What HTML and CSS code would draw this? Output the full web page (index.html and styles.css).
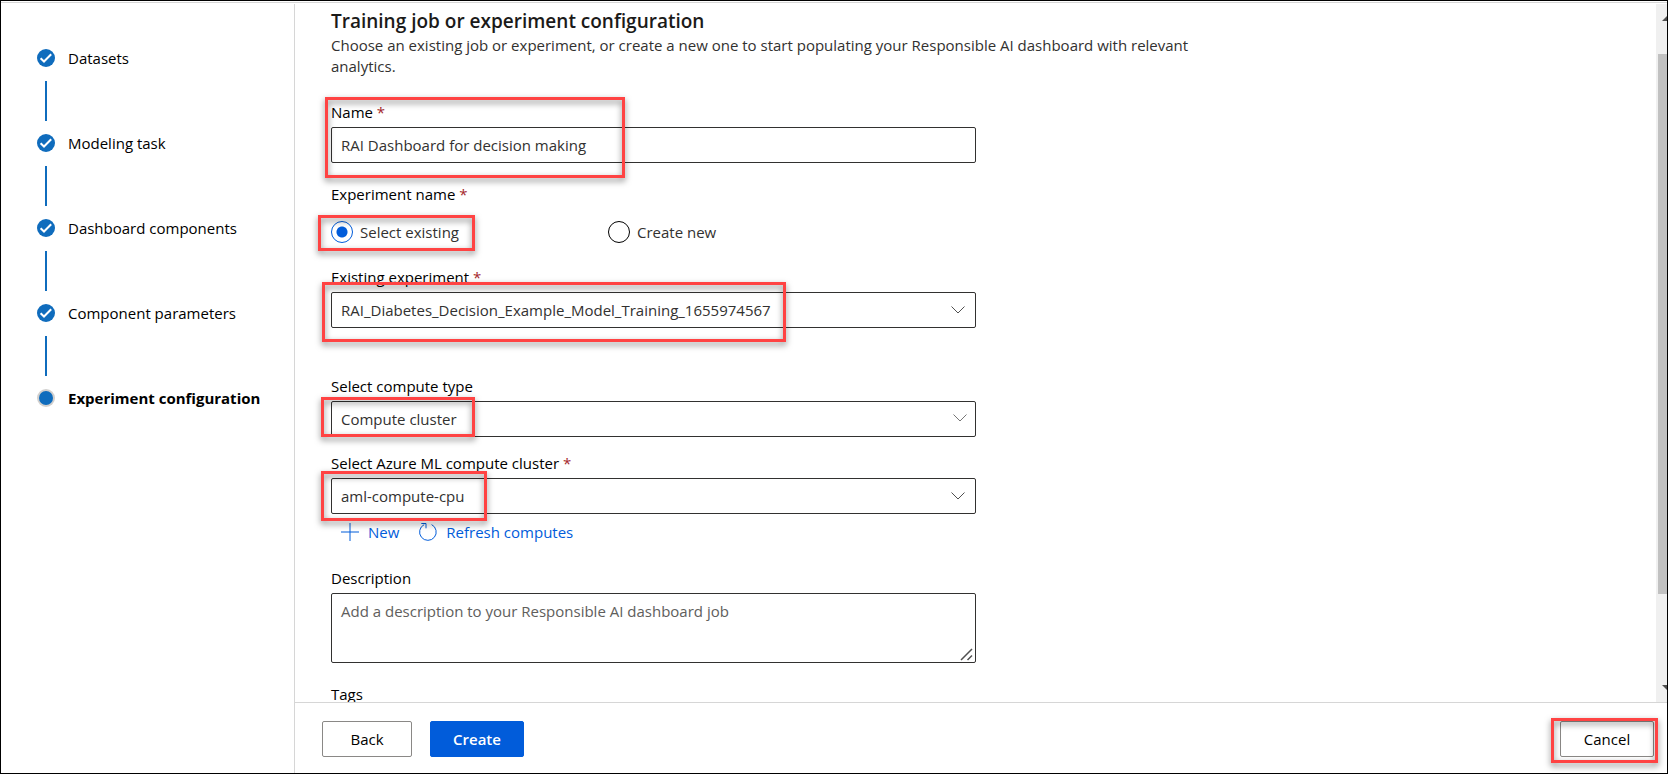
FILE: index.html
```html
<!DOCTYPE html>
<html lang="en">
<head>
<meta charset="utf-8">
<title>Training job or experiment configuration</title>
<link rel="stylesheet" href="styles.css">
</head>
<body>
<div class="app">
  <div class="topline"></div>
  <div class="layout">
    <nav class="sidebar" aria-label="Wizard steps">
      <ol class="steps">
        <li class="step"><svg class="step-icon" viewBox="0 0 18 18"><circle cx="9" cy="9" r="9"/><path d="M3.6 9.2 7 12.5 14.2 5.2"/></svg><span>Datasets</span></li>
        <li class="step"><svg class="step-icon" viewBox="0 0 18 18"><circle cx="9" cy="9" r="9"/><path d="M3.6 9.2 7 12.5 14.2 5.2"/></svg><span>Modeling task</span></li>
        <li class="step"><svg class="step-icon" viewBox="0 0 18 18"><circle cx="9" cy="9" r="9"/><path d="M3.6 9.2 7 12.5 14.2 5.2"/></svg><span>Dashboard components</span></li>
        <li class="step"><svg class="step-icon" viewBox="0 0 18 18"><circle cx="9" cy="9" r="9"/><path d="M3.6 9.2 7 12.5 14.2 5.2"/></svg><span>Component parameters</span></li>
        <li class="step current" aria-current="step"><svg class="step-icon" viewBox="0 0 18 18"><circle class="ring" cx="9" cy="9" r="9"/><circle cx="9" cy="9" r="7"/></svg><span>Experiment configuration</span></li>
      </ol>
    </nav>
    <div class="panel">
      <div class="scroll">
        <main class="content">
          <h1 class="title">Training job or experiment configuration</h1>
          <p class="intro">Choose an existing job or experiment, or create a new one to start populating your Responsible AI dashboard with relevant analytics.</p>
          <form class="form">
            <div class="field name-field">
              <label class="label" for="name">Name <span class="required">*</span></label>
              <input class="control" id="name" type="text" value="RAI Dashboard for decision making">
              <div class="highlight hl-name"></div>
            </div>
            <fieldset class="radio-group">
              <legend class="label">Experiment name <span class="required">*</span></legend>
              <div class="radios">
                <label class="radio"><input type="radio" name="exp" checked>Select existing<span class="highlight hl-radio"></span></label>
                <label class="radio"><input type="radio" name="exp">Create new</label>
              </div>
            </fieldset>
            <div class="field existing-field">
              <label class="label" for="existing">Existing experiment <span class="required">*</span></label>
              <select class="control" id="existing"><option>RAI_Diabetes_Decision_Example_Model_Training_1655974567</option></select>
              <svg class="chevron" viewBox="0 0 14 8"><path d="M.5.5 7 7 13.500.5"/></svg>
              <div class="highlight hl-existing"></div>
            </div>
            <div class="field type-field">
              <label class="label" for="ctype">Select compute type</label>
              <select class="control" id="ctype"><option>Compute cluster</option></select>
              <svg class="chevron light" viewBox="0 0 14 8"><path d="M.5.5 7 7 13.500.5"/></svg>
              <div class="highlight hl-type"></div>
            </div>
            <div class="field cluster-field">
              <label class="label" for="cluster">Select Azure ML compute cluster <span class="required">*</span></label>
              <select class="control" id="cluster"><option>aml-compute-cpu</option></select>
              <svg class="chevron" viewBox="0 0 14 8"><path d="M.5.5 7 7 13.500.5"/></svg>
              <div class="highlight hl-cluster"></div>
            </div>
            <div class="actions">
              <button class="link" type="button"><svg viewBox="0 0 18 18"><path d="M9 0V18M0 9H18"/></svg>New</button>
              <button class="link" type="button"><svg viewBox="0 0 18 18"><path d="M12.600 1.600A8.300 8.300 0 1 1 5.200 1.600M2.300.5H7V5.300"/></svg>Refresh computes</button>
            </div>
            <div class="field description-field">
              <label class="label" for="desc">Description</label>
              <textarea class="control area" id="desc" placeholder="Add a description to your Responsible AI dashboard job"></textarea>
              <svg class="grip" viewBox="0 0 13 13"><path d="M1 12 12 1M7.500 12 12 7.500"/></svg>
            </div>
            <div class="label tags">Tags</div>
          </form>
        </main>
        <div class="scrollbar" aria-hidden="true">
          <svg class="arrow" viewBox="0 0 10 5"><path d="M0 5 5 0 10 5Z"/></svg>
          <div class="track"><div class="thumb"></div></div>
          <svg class="arrow" viewBox="0 0 10 5"><path d="M0 0 5 5 10 0Z"/></svg>
        </div>
      </div>
      <footer class="footer">
        <button class="btn" type="button">Back</button>
        <button class="btn primary" type="button">Create</button>
        <div class="cancel"><button class="btn wide" type="button">Cancel</button><div class="highlight hl-cancel"></div></div>
      </footer>
    </div>
  </div>
</div>
</body>
</html>
```
FILE: styles.css
```css
* { box-sizing: border-box; }

body {
  margin: 0;
  font-family: "Open Sans", "Noto Sans", sans-serif;
  font-size: 15px;
  line-height: 20px;
  color: #323130;
  background: #fff;
}

.app {
  height: 100vh;
  display: flex;
  flex-direction: column;
  border: 1px solid #000;
  overflow: hidden;
}

.topline {
  flex: none;
  height: 1px;
  margin: 1px 0;
  background: #d6d6d6;
}

.layout { flex: 1; min-height: 0; display: flex; }

.sidebar {
  flex: none;
  width: 294px;
  padding: 45px 0 0 36px;
  border-right: 1px solid #d6d6d6;
}

.steps {
  list-style: none;
  margin: 0;
  padding: 0;
  display: flex;
  flex-direction: column;
  gap: 67px;
}

.step {
  position: relative;
  display: flex;
  align-items: center;
  gap: 13px;
  height: 18px;
  font-weight: 500;
  color: #000;
}

.step:not(:last-child)::after {
  content: "";
  position: absolute;
  left: 8px;
  top: 32px;
  width: 2px;
  height: 40px;
  background: #0f6cbd;
}

.step-icon { width: 18px; height: 18px; fill: #0f6cbd; }
.step-icon path { fill: none; stroke: #fff; stroke-width: 2; }
.step-icon .ring { fill: #d2d0ce; }
.current { font-weight: 700; }

.panel { flex: 1; min-width: 0; display: flex; flex-direction: column; }
.scroll { flex: 1; min-height: 0; display: flex; overflow: hidden; }
.content { flex: 1; min-width: 0; padding: 3px 36px 0; }

.title { margin: 0; font-size: 19px; line-height: 28px; font-weight: 600; color: #1b1a19; }
.intro { margin: 0; max-width: 872px; line-height: 21px; }

.form { max-width: 645px; padding-top: 25px; }
.field { position: relative; display: flex; flex-direction: column; gap: 5px; }

.label { line-height: 20px; font-weight: 500; color: #000; padding: 0; }
.required { color: #a4262c; }

.control {
  width: 100%;
  height: 36px;
  margin: 0;
  padding: 0 9px;
  border: 1px solid #323130;
  border-radius: 2px;
  background: #fff;
  color: #323130;
  font: inherit;
  appearance: none;
}

.area { height: 70px; padding: 7px 9px; resize: none; display: block; }
.area::placeholder { color: #605e5c; opacity: 1; }

.radio-group { margin: 21px 0 0; padding: 0; border: 0; }
.radios { display: grid; grid-template-columns: 277px auto; margin-top: 17px; }
.radio { position: relative; display: flex; align-items: center; gap: 7px; height: 22px; }
.radio input {
  appearance: none;
  width: 22px;
  height: 22px;
  margin: 0;
  border: 1px solid #000;
  border-radius: 50%;
}
.radio input:checked {
  border-color: #015cda;
  background: radial-gradient(circle, #015cda 5px, transparent 6px);
}

.existing-field { margin-top: 24px; }
.type-field { margin-top: 48px; }
.cluster-field { margin-top: 16px; }
.description-field { margin-top: 26px; }
.tags { margin-top: 21px; }

.chevron {
  position: absolute;
  right: 11px;
  bottom: 14px;
  width: 14px;
  height: 8px;
  fill: none;
  stroke: #505050;
  pointer-events: none;
}
.chevron.light { right: 9px; bottom: 15px; stroke: #767676; }

.grip {
  position: absolute;
  right: 3px;
  bottom: 2px;
  width: 13px;
  height: 13px;
  fill: none;
  stroke: #505050;
  stroke-width: 1.5;
  pointer-events: none;
}

.actions { display: flex; gap: 20px; margin-top: 8px; padding-left: 10px; }
.link {
  display: flex;
  align-items: center;
  gap: 9px;
  height: 20px;
  padding: 0;
  border: 0;
  background: none;
  color: #015cda;
  font: inherit;
}
.link svg { width: 18px; height: 18px; fill: none; stroke: #015cda; }

.scrollbar {
  flex: none;
  width: 11px;
  padding: 12px 0;
  display: flex;
  flex-direction: column;
  overflow: hidden;
  background: #f0f0f0;
}
.arrow { flex: none; width: 10px; height: 5px; margin-left: 6px; fill: #505050; }
.track { flex: 1; padding: 33px 0 91px 2px; }
.thumb { height: 100%; background: #c1c1c1; }

.footer {
  flex: none;
  display: flex;
  gap: 18px;
  padding: 18px 13px 16px 27px;
  border-top: 1px solid #d6d6d6;
}
.btn {
  min-width: 90px;
  height: 36px;
  padding: 0 20px;
  border: 1px solid #8a8886;
  border-radius: 2px;
  background: #fff;
  color: #000;
  font: inherit;
  font-weight: 500;
}
.primary { min-width: 94px; border-color: #015cda; background: #015cda; color: #fff; font-weight: 600; }
.wide { min-width: 94px; }
.cancel { position: relative; margin-left: auto; }

.highlight {
  position: absolute;
  border: 3px solid #ff4343;
  filter: drop-shadow(0 3px 3px rgba(0, 0, 0, 0.5));
  pointer-events: none;
}
.hl-name { left: -6px; top: -5px; width: 300px; height: 81px; }
.hl-radio { left: -13px; top: -6px; width: 157px; height: 36px; }
.hl-existing { left: -9px; top: 15px; width: 464px; height: 60px; }
.hl-type { left: -10px; top: 21px; width: 154px; height: 40px; }
.hl-cluster { left: -10px; top: 18px; width: 166px; height: 50px; }
.hl-cancel { inset: -3px -4px -6px -9px; }
```
